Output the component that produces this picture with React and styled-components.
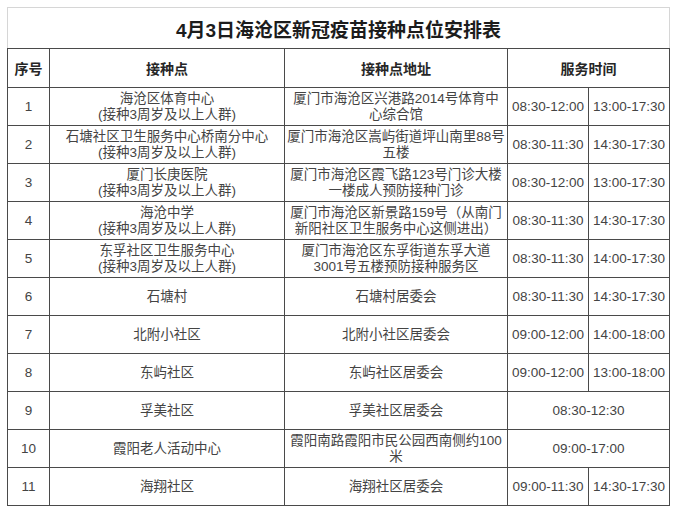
import styled, { createGlobalStyle } from "styled-components";

const GlobalStyle = createGlobalStyle`
  html, body {
    margin: 0;
    background: #ffffff;
  }
  body {
    font-family: "Liberation Sans", "Noto Sans CJK SC", sans-serif;
  }
`;

const sites = [
  { no: 1, name: "海沧区体育中心\n(接种3周岁及以上人群)", addr: "厦门市海沧区兴港路2014号体育中\n心综合馆", times: ["08:30-12:00", "13:00-17:30"] },
  { no: 2, name: "石塘社区卫生服务中心桥南分中心\n(接种3周岁及以上人群)", addr: "厦门市海沧区嵩屿街道坪山南里88号\n五楼", times: ["08:30-11:30", "14:30-17:30"] },
  { no: 3, name: "厦门长庚医院\n(接种3周岁及以上人群)", addr: "厦门市海沧区霞飞路123号门诊大楼\n一楼成人预防接种门诊", times: ["08:30-12:00", "13:00-17:30"] },
  { no: 4, name: "海沧中学\n(接种3周岁及以上人群)", addr: "厦门市海沧区新景路159号（从南门\n新阳社区卫生服务中心这侧进出）", times: ["08:30-11:30", "14:30-17:30"] },
  { no: 5, name: "东孚社区卫生服务中心\n(接种3周岁及以上人群)", addr: "厦门市海沧区东孚街道东孚大道\n3001号五楼预防接种服务区", times: ["08:30-11:30", "14:00-17:30"] },
  { no: 6, name: "石塘村", addr: "石塘村居委会", times: ["08:30-11:30", "14:30-17:30"] },
  { no: 7, name: "北附小社区", addr: "北附小社区居委会", times: ["09:00-12:00", "14:00-18:00"] },
  { no: 8, name: "东屿社区", addr: "东屿社区居委会", times: ["09:00-12:00", "13:00-18:00"] },
  { no: 9, name: "孚美社区", addr: "孚美社区居委会", times: ["08:30-12:30"] },
  { no: 10, name: "霞阳老人活动中心", addr: "霞阳南路霞阳市民公园西南侧约100\n米", times: ["09:00-17:00"] },
  { no: 11, name: "海翔社区", addr: "海翔社区居委会", times: ["09:00-11:30", "14:30-17:30"] },
];

const Page = styled.div`
  padding: 7px 8px 7px 7px;
`;

const Table = styled.table`
  width: 662px;
  border-collapse: collapse;
  table-layout: fixed;
  color: #444444;
`;

const TitleCell = styled.th`
  height: 40px;
  padding: 0;
  border: 1px solid #d6d6d6;
  border-bottom: 1px solid #4a4a4a;
  font-size: 19px;
  font-weight: 700;
  color: #1c1c1c;
  text-align: center;
  vertical-align: middle;
`;

const HeadCell = styled.th`
  height: 38px;
  padding: 0;
  border: 1px solid #4a4a4a;
  font-size: 14px;
  font-weight: 700;
  color: #262626;
  text-align: center;
  vertical-align: middle;
`;

const Cell = styled.td`
  height: 37px;
  padding: 0 ${(p) => (p.$wide ? 2 : 0)}px;
  border: 1px solid #4a4a4a;
  font-size: 13.5px;
  line-height: 16px;
  text-align: center;
  vertical-align: middle;
  white-space: pre-line;
  overflow: hidden;
`;

export default function App() {
  return (
    <Page>
      <GlobalStyle />
      <Table>
        <colgroup>
          <col style={{ width: 42 }} />
          <col style={{ width: 235 }} />
          <col style={{ width: 223 }} />
          <col style={{ width: 81 }} />
          <col style={{ width: 81 }} />
        </colgroup>
        <thead>
          <tr>
            <TitleCell colSpan={5}>4月3日海沧区新冠疫苗接种点位安排表</TitleCell>
          </tr>
          <tr>
            <HeadCell>序号</HeadCell>
            <HeadCell>接种点</HeadCell>
            <HeadCell>接种点地址</HeadCell>
            <HeadCell colSpan={2}>服务时间</HeadCell>
          </tr>
        </thead>
        <tbody>
          {sites.map((s) => (
            <tr key={s.no}>
              <Cell>{s.no}</Cell>
              <Cell>{s.name}</Cell>
              <Cell $wide>{s.addr}</Cell>
              {s.times.length === 1 ? (
                <Cell colSpan={2}>{s.times[0]}</Cell>
              ) : (
                s.times.map((t) => <Cell key={t}>{t}</Cell>)
              )}
            </tr>
          ))}
        </tbody>
      </Table>
    </Page>
  );
}
